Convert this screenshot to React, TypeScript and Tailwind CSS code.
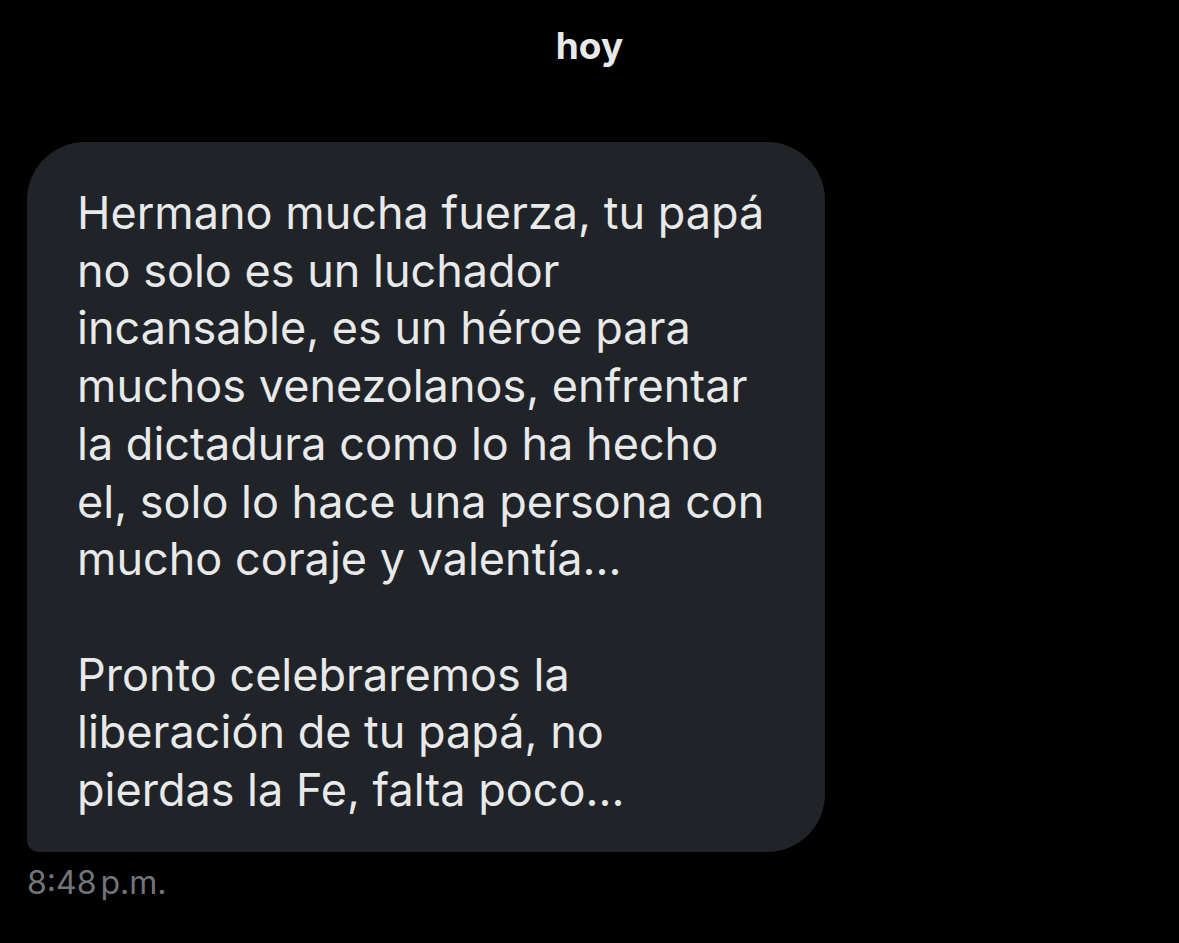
const MESSAGE = `Hermano mucha fuerza, tu papá
no solo es un luchador
incansable, es un héroe para
muchos venezolanos, enfrentar
la dictadura como lo ha hecho
el, solo lo hace una persona con
mucho coraje y valentía...

Pronto celebraremos la
liberación de tu papá, no
pierdas la Fe, falta poco...`;

export default function App() {
  return (
    <div
      className="min-h-[943px] w-[1179px] bg-black"
      style={{ fontFamily: "Inter, 'Noto Sans', sans-serif" }}
    >
      <div className="flex justify-center pt-[23px]">
        <span className="text-[37px] font-bold leading-[46px] text-[#e7e9ea]">hoy</span>
      </div>

      <div className="mt-[73px] pl-[27px]">
        <div className="h-[710px] w-[798px] rounded-[58px] rounded-bl-[12px] bg-[#202327] pl-[50px] pr-[30px] pt-[42px]">
          <p className="whitespace-pre-line text-[45px] leading-[57.7px] text-[#e7e9ea]">
            {MESSAGE}
          </p>
        </div>
        <div className="mt-[13px] text-[32px] leading-[36px] text-[#71767b]">
          8:48<span className="ml-[4px]">p.m.</span>
        </div>
      </div>
    </div>
  );
}
